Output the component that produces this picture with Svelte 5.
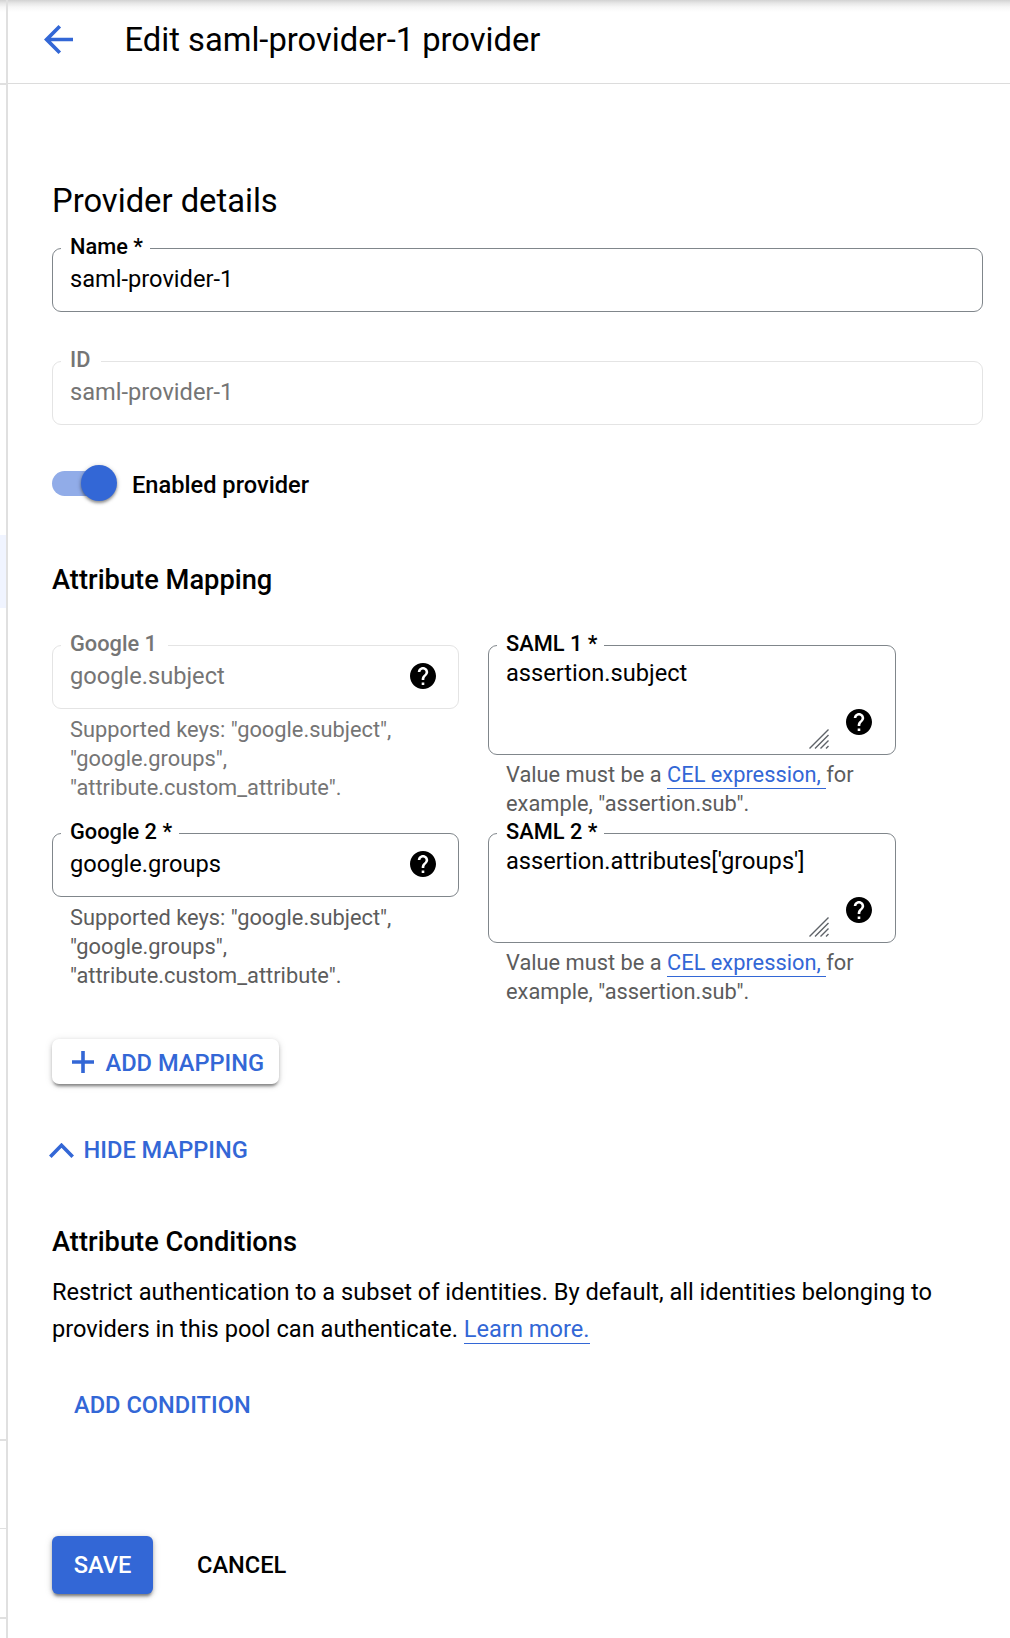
<script>
  const rows = [
    { n: 1, key: 'google.subject', value: 'assertion.subject', locked: true },
    { n: 2, key: 'google.groups', value: "assertion.attributes['groups']", locked: false }
  ];
</script>

{#snippet help()}
  <svg class="help" viewBox="2 2 20 20" aria-hidden="true">
    <path d="M12 2C6.48 2 2 6.48 2 12s4.48 10 10 10 10-4.48 10-10S17.52 2 12 2zm1 17h-2v-2h2v2zm2.07-7.75-.9.92C13.45 12.9 13 13.5 13 15h-2v-.5c0-1.1.45-2.1 1.17-2.83l1.24-1.26c.37-.36.59-.86.59-1.41 0-1.1-.9-2-2-2s-2 .9-2 2H8c0-2.21 1.79-4 4-4s4 1.79 4 4c0 .88-.36 1.68-.93 2.25z" />
  </svg>
{/snippet}

<div class="app">
  <div class="rail">
    <div class="seg top"></div>
    <div class="seg upper"></div>
    <div class="seg active"></div>
    <div class="seg middle"></div>
    <div class="seg lower"></div>
    <div class="seg bottom"></div>
  </div>
  <main class="panel">
    <header>
      <svg class="back" viewBox="4 4 16 16" aria-hidden="true">
        <path d="M20 11H7.83l5.59-5.59L12 4l-8 8 8 8 1.41-1.41L7.83 13H20v-2z" />
      </svg>
      <h1>Edit saml-provider-1 provider</h1>
    </header>
    <div class="content">
      <h2>Provider details</h2>
      <div class="field name">
        <span class="label">Name *</span>
        <span class="value">saml-provider-1</span>
      </div>
      <div class="field id disabled">
        <span class="label">ID</span>
        <span class="value">saml-provider-1</span>
      </div>
      <div class="switch-row">
        <span class="track"><span class="thumb"></span></span>
        <span class="switch-label">Enabled provider</span>
      </div>

      <h3 class="mapping-title">Attribute Mapping</h3>
      <div class="grid">
        {#each rows as row}
          <div class="cell" class:locked={row.locked}>
            <div class="field" class:disabled={row.locked}>
              <span class="label">Google {row.n}{row.locked ? '' : ' *'}</span>
              <span class="value">{row.key}</span>
              {@render help()}
            </div>
            <p class="hint">Supported keys: "google.subject",<br />"google.groups",<br />"attribute.custom_attribute".</p>
          </div>
          <div class="cell">
            <div class="field area">
              <span class="label">SAML {row.n} *</span>
              <span class="value">{row.value}</span>
              <svg class="grip" viewBox="0 0 20 20" aria-hidden="true">
                <path d="M0.5 19.5 19.5 0.5M6 19.5 19.5 6M11.5 19.5 19.5 11.5M17 19.5 19.5 17" />
              </svg>
              {@render help()}
            </div>
            <p class="hint">Value must be a <a href="#cel">CEL expression,&nbsp;</a>for<br />example, "assertion.sub".</p>
          </div>
        {/each}
      </div>

      <button class="add-mapping">
        <svg viewBox="0 0 22 22" aria-hidden="true"><path d="M11 0V22M0 11H22" /></svg>
        <span>ADD MAPPING</span>
      </button>
      <button class="hide-mapping">
        <svg viewBox="0 0 25 15" aria-hidden="true"><path d="M1.3 13.7 12.5 2.3 23.7 13.7" /></svg>
        <span>HIDE MAPPING</span>
      </button>

      <h3 class="conditions-title">Attribute Conditions</h3>
      <p class="text">Restrict authentication to a subset of identities. By default, all identities belonging to<br />providers in this pool can authenticate. <a href="#learn">Learn more.</a></p>
      <button class="add-condition">ADD CONDITION</button>

      <div class="actions">
        <button class="save">SAVE</button>
        <button class="cancel">CANCEL</button>
      </div>
    </div>
  </main>
</div>

<style>
  :global(body) { background: #fff; }
  .app {
    display: flex;
    position: relative;
    width: 1010px;
    height: 1638px;
    overflow: hidden;
    background: #fff;
    color: #000;
    font-family: Roboto, sans-serif;
    font-size: 23.63px;
  }
  .app::before {
    content: '';
    position: absolute;
    inset: 0 0 auto;
    height: 12px;
    background: linear-gradient(#d2d2d2, #e6e6e6 25%, #f7f7f7 60%, #fff);
  }
  .rail { width: 6px; flex: none; position: relative; }
  .seg { box-sizing: border-box; border-bottom: 2px solid #e0e0e0; }
  .top { height: 85px; }
  .upper { height: 450px; border: 0; }
  .active { height: 73px; border: 0; background: #f0f4ff; }
  .middle { height: 833px; }
  .lower { height: 88px; border-bottom-width: 1px; }
  .bottom { height: 90px; }
  .panel { flex: 1; border-left: 2px solid #e0e0e0; position: relative; }
  header {
    display: flex;
    align-items: center;
    height: 78px;
    padding: 0 0 5px 36px;
    border-bottom: 1px solid #dcdcdc;
  }
  .back { width: 29px; height: 29px; fill: #3367d6; }
  h1, h2, h3, p { margin: 0; }
  h1 { margin-left: 51.5px; padding-top: 1px; font-size: 32.73px; font-weight: 400; line-height: 40px; }
  .content { width: 931px; padding: 97px 0 0 44px; }
  h2 { font-size: 32.73px; font-weight: 400; line-height: 40px; }
  h3 { font-size: 27.27px; font-weight: 500; line-height: 36px; }
  .field {
    position: relative;
    box-sizing: border-box;
    display: flex;
    height: 64px;
    padding: 0 22px 0 17px;
    border: 1px solid #80868b;
    border-radius: 9px;
  }
  .label {
    position: absolute;
    left: 8px;
    top: -15px;
    padding: 0 7px 0 9px;
    background: #fff;
    font-size: 21.8px;
    font-weight: 500;
    line-height: 26px;
    white-space: nowrap;
  }
  .value { flex: 1; padding-top: 14px; line-height: 32px; white-space: nowrap; }
  .disabled { border-color: #e4e4e4; }
  .disabled .label { padding-right: 11px; }
  .disabled .label, .disabled .value, .locked .hint { color: #757575; }
  .name { margin-top: 27px; }
  .id { margin-top: 49px; }
  .switch-row { display: flex; align-items: center; height: 36px; margin-top: 40px; }
  .track {
    display: flex;
    align-items: center;
    justify-content: flex-end;
    width: 65px;
    height: 25px;
    margin-right: 15px;
    border-radius: 13px;
    background: linear-gradient(90deg, #91ace8 58px, transparent 58px);
  }
  .thumb {
    width: 36px;
    height: 36px;
    flex: none;
    border-radius: 50%;
    background: #3367d6;
    box-shadow: 0 2px 3px rgba(0, 0, 0, .35), 0 1px 5px rgba(0, 0, 0, .2);
  }
  .switch-label { padding-top: 3px; font-weight: 500; }
  .mapping-title { margin-top: 61px; }
  .grid {
    display: grid;
    grid-template-columns: 407px 408px;
    grid-auto-rows: 188px;
    column-gap: 29px;
    margin-top: 47px;
  }
  .help { width: 26px; height: 26px; margin-top: 17px; flex: none; }
  .area { height: 110px; padding-right: 23px; }
  .area .value { padding-top: 11px; width: 0; }
  .area .help { margin: 63px 0 0 17px; }
  .grip { width: 20px; height: 20px; margin-top: 83px; fill: none; stroke: #5f6368; stroke-width: 1.4; }
  .hint { padding: 6px 0 0 18px; font-size: 21.82px; line-height: 29px; color: #5c5c5c; white-space: nowrap; }
  .area + .hint { padding-top: 5px; }
  a { color: #3367d6; text-decoration: none; border-bottom: 1px solid #3367d6; }
  .hint a { padding-bottom: 1px; }
  button {
    display: flex;
    align-items: center;
    padding: 0;
    border: 0;
    background: none;
    color: #3367d6;
    font: 500 23.63px/36px Roboto, sans-serif;
    white-space: nowrap;
  }
  button svg { fill: none; stroke: #3367d6; stroke-width: 3.6; }
  .add-mapping {
    width: 227px;
    height: 45px;
    margin-top: 18px;
    padding-left: 20px;
    gap: 11.5px;
    border-radius: 7px;
    background: #fff;
    box-shadow: 0 4px 3px -2px rgba(0, 0, 0, .35), 0 2px 4px rgba(0, 0, 0, .2), 0 1px 9px rgba(0, 0, 0, .1);
  }
  .add-mapping svg { width: 22px; height: 22px; margin-top: 1px; }
  .add-mapping span { padding-top: 2px; }
  .hide-mapping { height: 36px; margin: 48px 0 0 -3px; gap: 9.5px; }
  .hide-mapping svg { width: 25px; height: 15px; }
  .conditions-title { margin-top: 56px; }
  .text { margin-top: 14px; line-height: 37px; white-space: nowrap; }
  .add-condition { height: 36px; margin: 39px 0 0 22px; }
  .actions { display: flex; margin-top: 113px; }
  .save {
    justify-content: center;
    width: 101px;
    height: 58px;
    border-radius: 6px;
    background: #3367d6;
    color: #fff;
    box-shadow: 0 4px 3px -2px rgba(0, 0, 0, .35), 0 2px 4px rgba(0, 0, 0, .25), 0 1px 9px rgba(0, 0, 0, .12);
  }
  .cancel { margin-left: 44px; color: #000; }
</style>
